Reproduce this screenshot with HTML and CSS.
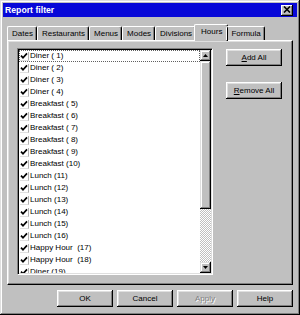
FILE: index.html
```
<!DOCTYPE html>
<html>
<head>
<meta charset="utf-8">
<link rel="stylesheet" href="styles.css">
</head>
<body>
<div class="window">
  <div class="titlebar">
    <span class="title">Report filter</span>
    <span class="close"><svg width="8" height="7" viewBox="0 0 8 7"><path d="M1 0.5 L7 6.5 M7 0.5 L1 6.5" stroke="#000" stroke-width="1.6"/></svg></span>
  </div>
  <div class="body">
    <div class="tabs">
      <div class="tab">Dates</div>
      <div class="tab">Restaurants</div>
      <div class="tab">Menus</div>
      <div class="tab">Modes</div>
      <div class="tab">Divisions</div>
      <div class="tab active">Hours</div>
      <div class="tab">Formula</div>
    </div>
    <div class="panel">
      <div class="listbox">
        <div class="items">
          <div class="item focus"><span class="cb"></span><span class="lbl">Diner ( 1)</span></div>
          <div class="item"><span class="cb"></span><span class="lbl">Diner ( 2)</span></div>
          <div class="item"><span class="cb"></span><span class="lbl">Diner ( 3)</span></div>
          <div class="item"><span class="cb"></span><span class="lbl">Diner ( 4)</span></div>
          <div class="item"><span class="cb"></span><span class="lbl">Breakfast ( 5)</span></div>
          <div class="item"><span class="cb"></span><span class="lbl">Breakfast ( 6)</span></div>
          <div class="item"><span class="cb"></span><span class="lbl">Breakfast ( 7)</span></div>
          <div class="item"><span class="cb"></span><span class="lbl">Breakfast ( 8)</span></div>
          <div class="item"><span class="cb"></span><span class="lbl">Breakfast ( 9)</span></div>
          <div class="item"><span class="cb"></span><span class="lbl">Breakfast (10)</span></div>
          <div class="item"><span class="cb"></span><span class="lbl">Lunch (11)</span></div>
          <div class="item"><span class="cb"></span><span class="lbl">Lunch (12)</span></div>
          <div class="item"><span class="cb"></span><span class="lbl">Lunch (13)</span></div>
          <div class="item"><span class="cb"></span><span class="lbl">Lunch (14)</span></div>
          <div class="item"><span class="cb"></span><span class="lbl">Lunch (15)</span></div>
          <div class="item"><span class="cb"></span><span class="lbl">Lunch (16)</span></div>
          <div class="item"><span class="cb"></span><span class="lbl">Happy Hour  (17)</span></div>
          <div class="item"><span class="cb"></span><span class="lbl">Happy Hour  (18)</span></div>
          <div class="item"><span class="cb"></span><span class="lbl">Diner (19)</span></div>
        </div>
        <div class="scrollbar">
          <div class="sbtn"><svg width="5" height="3" viewBox="0 0 5 3"><path d="M2.5 0 L5 3 L0 3 Z" fill="#000"/></svg></div>
          <div class="thumb"></div>
          <div class="track"></div>
          <div class="sbtn"><svg width="5" height="3" viewBox="0 0 5 3"><path d="M0 0 L5 0 L2.5 3 Z" fill="#000"/></svg></div>
        </div>
      </div>
      <div class="side">
        <div class="btn"><span><u>A</u>dd All</span></div>
        <div class="btn"><span><u>R</u>emove All</span></div>
      </div>
    </div>
    <div class="footer">
      <div class="btn">OK</div>
      <div class="btn">Cancel</div>
      <div class="btn disabled">Apply</div>
      <div class="btn">Help</div>
    </div>
  </div>
</div>
</body>
</html>
```

FILE: styles.css
```
* { box-sizing: border-box; }
html, body { margin: 0; padding: 0; background: #c0c0c0; }
body { font-family: "Liberation Sans", Arial, sans-serif; font-size: 8px; color: #000; }

.window {
  width: 300px;
  height: 315px;
  padding: 3px;
  background: #c0c0c0;
  box-shadow: inset -1px -1px #000, inset 1px 1px #dfdfdf, inset -2px -2px #808080, inset 2px 2px #fff;
  display: flex;
  flex-direction: column;
}

.titlebar {
  height: 14px;
  background: #0808d8;
  display: flex;
  align-items: center;
  justify-content: space-between;
  padding: 0 4px 0 2px;
}
.title { color: #fff; font-weight: bold; font-size: 8.7px; }
.close {
  width: 12px;
  height: 11px;
  background: #c0c0c0;
  box-shadow: inset -1px -1px #000, inset 1px 1px #fff, inset -2px -2px #808080;
  display: flex;
  align-items: center;
  justify-content: center;
  padding-bottom: 1px;
}

.body {
  flex: 1;
  padding: 7px 4px 0 4px;
  display: flex;
  flex-direction: column;
}

.tabs {
  height: 16px;
  display: flex;
  align-items: flex-end;
  position: relative;
  z-index: 1;
}
.tab {
  height: 14px;
  padding: 2px 3px 0 4px;
  border-left: 1px solid #fff;
  border-top: 1px solid #fff;
  border-right: 1px solid #000;
  border-radius: 2px 2px 0 0;
  box-shadow: inset -1px 0 #808080;
  line-height: 10px;
  white-space: nowrap;
}
.tab.active {
  height: 17px;
  margin: 0 -2px -1px -2px;
  padding: 2px 5px 0 6px;
  background: #c0c0c0;
}

.panel {
  height: 245px;
  border-top: 1px solid #fff;
  border-left: 1px solid #fff;
  border-right: 1px solid #000;
  border-bottom: 1px solid #000;
  box-shadow: inset -1px -1px #808080, inset 1px 1px #dfdfdf;
  padding: 7px 10px 0 9px;
  display: flex;
  gap: 13px;
}

.listbox {
  width: 196px;
  height: 227px;
  border-top: 1px solid #808080;
  border-left: 1px solid #808080;
  border-right: 1px solid #fff;
  border-bottom: 1px solid #fff;
  box-shadow: inset 1px 1px #000, inset -1px -1px #dfdfdf;
  padding: 1px;
  display: flex;
  background: #fff;
}
.items {
  flex: 1;
  overflow: hidden;
  background: #fff;
}
.item {
  height: 12px;
  display: flex;
  align-items: center;
  padding-left: 1px;
}
.item.focus { outline: 1px dotted #606060; outline-offset: -1px; }
.cb {
  width: 9px;
  height: 9px;
  margin-right: 1px;
  flex: none;
  border-right: 1px solid #b0b0b0;
  border-bottom: 1px solid #e0e0e0;
  background: #fff url("data:image/svg+xml;utf8,<svg xmlns='http://www.w3.org/2000/svg' width='8' height='8' viewBox='0 0 8 8'><path d='M1 3.6 L3 5.8 L7 1.4' fill='none' stroke='black' stroke-width='1.7'/></svg>") no-repeat 0 0;
}
.lbl { white-space: pre; line-height: 12px; }

.scrollbar {
  width: 11px;
  display: flex;
  flex-direction: column;
  background: #c0c0c0;
}
.sbtn {
  height: 11px;
  background: #c0c0c0;
  box-shadow: inset -1px -1px #000, inset 1px 1px #dfdfdf, inset -2px -2px #808080, inset 2px 2px #fff;
  display: flex;
  align-items: center;
  justify-content: center;
}
.thumb {
  height: 148px;
  background: #c0c0c0;
  box-shadow: inset -1px -1px #000, inset 1px 1px #dfdfdf, inset -2px -2px #808080, inset 2px 2px #fff;
}
.track {
  flex: 1;
  background-image: repeating-conic-gradient(#fff 0 25%, #c0c0c0 0 50%);
  background-size: 2px 2px;
}

.side {
  display: flex;
  flex-direction: column;
  gap: 16px;
  padding-top: 1px;
}

.btn {
  width: 56px;
  height: 17px;
  background: #c0c0c0;
  box-shadow: inset -1px -1px #000, inset 1px 1px #fff, inset -2px -2px #808080, inset 2px 2px #dfdfdf;
  display: flex;
  align-items: center;
  justify-content: center;
  white-space: nowrap;
  padding-bottom: 1px;
}
.btn.disabled { color: #808080; text-shadow: 1px 1px #fff; }

.footer {
  display: flex;
  justify-content: flex-end;
  gap: 4px;
  padding-top: 5px;
}
```
